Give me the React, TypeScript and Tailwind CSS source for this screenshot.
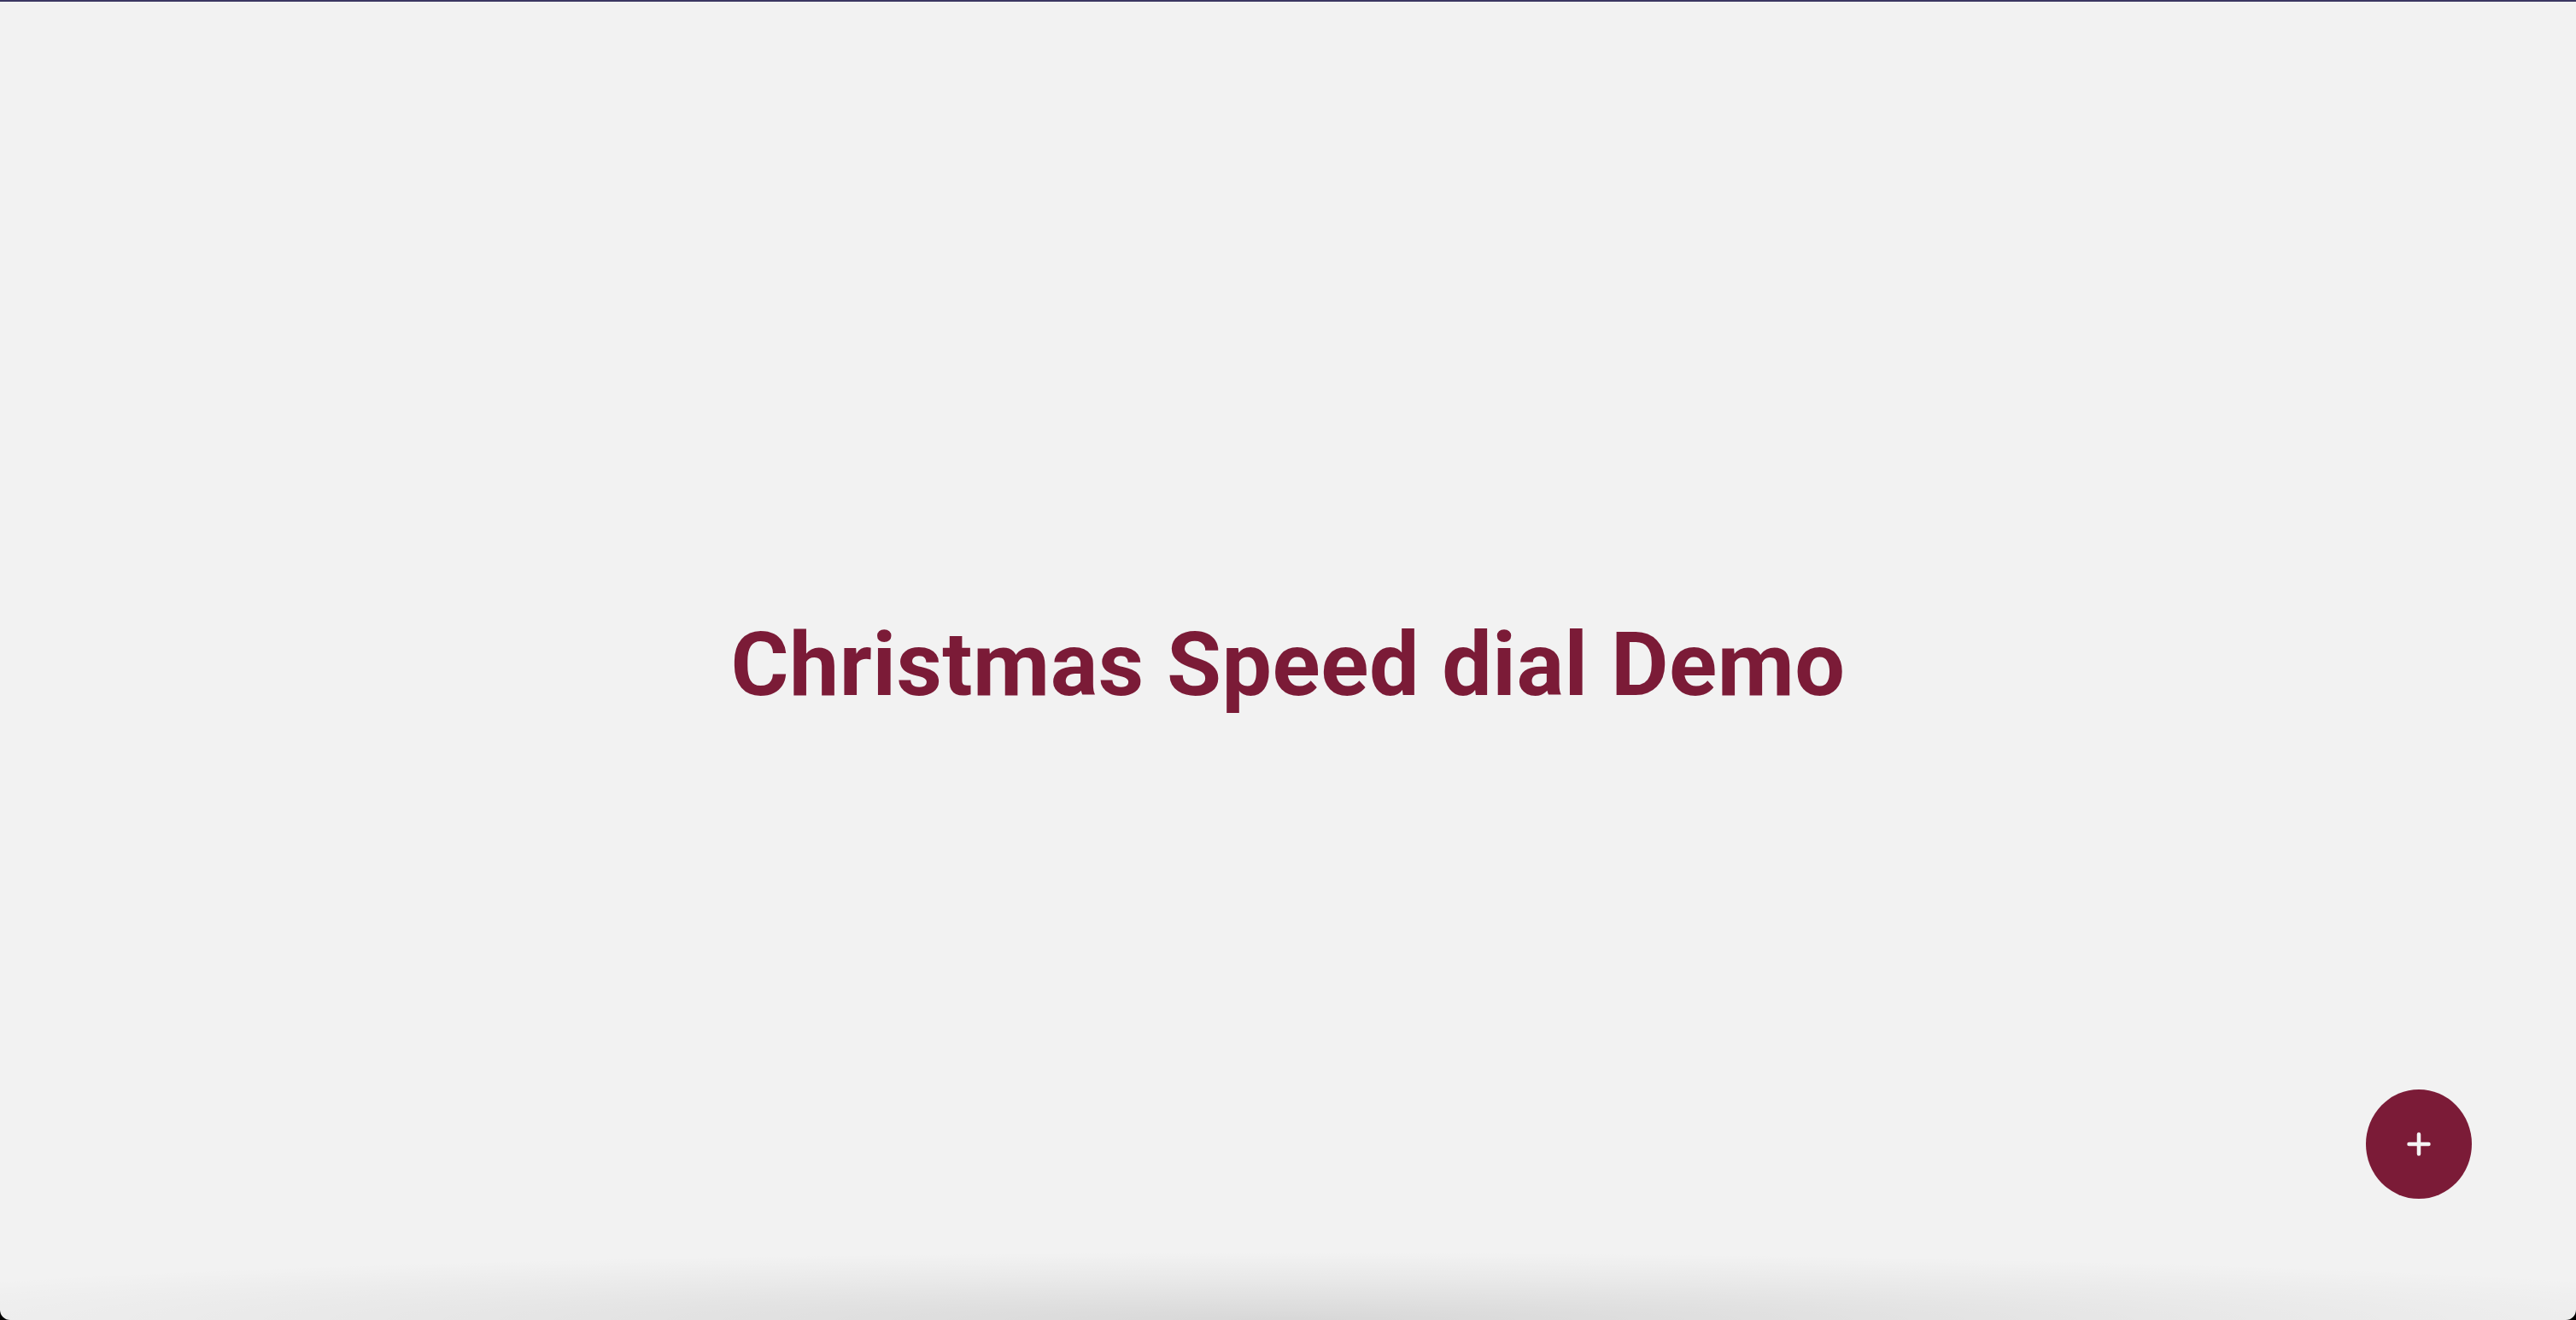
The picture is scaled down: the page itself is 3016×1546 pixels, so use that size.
import React, { useState } from "react";

export default function App() {
  const [open, setOpen] = useState(false);

  return (
    <div className="w-full h-[1546px] bg-black">
      <div className="relative w-full h-full flex flex-col bg-[#f2f2f2] border-t-2 border-[#3b3762] rounded-b-[12px] overflow-hidden">
        <main className="flex-1 flex items-center justify-center pt-[10px]">
          <h1
            className="text-[104px] font-bold text-[#7b1b37] leading-none tracking-[0.5px]"
            style={{ fontFamily: 'Roboto, "Liberation Sans", sans-serif' }}
          >
            Christmas Speed dial Demo
          </h1>
        </main>

        <button
          onClick={() => setOpen(!open)}
          className="absolute right-[122px] bottom-[142px] w-[124px] h-[128px] rounded-[50%] bg-[#7b1b37] flex items-center justify-center cursor-pointer"
          aria-label="Open speed dial"
        >
          <svg width="28" height="28" viewBox="0 0 28 28" fill="none">
            <path
              d="M14 2.5v23M2.5 14h23"
              stroke="#f4f4f4"
              strokeWidth="4.5"
              strokeLinecap="round"
            />
          </svg>
        </button>

        <div className="pointer-events-none absolute left-0 right-0 bottom-0 h-[80px] bg-[radial-gradient(ellipse_62%_100%_at_50%_100%,rgba(0,0,0,0.11),rgba(0,0,0,0.04)_60%,rgba(0,0,0,0))]" />
      </div>
    </div>
  );
}
